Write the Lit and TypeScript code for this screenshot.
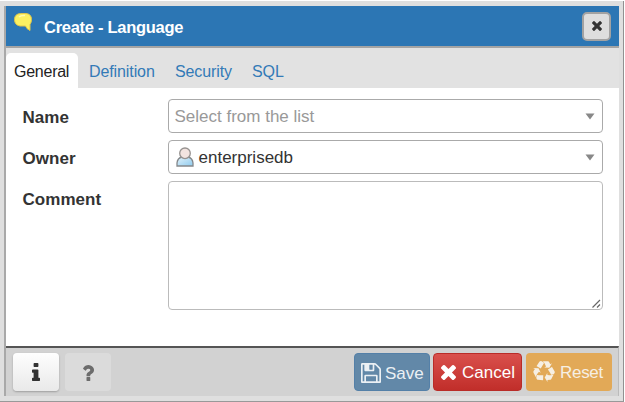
import { LitElement, html, css, svg } from "lit";
import { customElement } from "lit/decorators.js";

const TIMES = "M1490 1322q0 40-28 68l-136 136q-28 28-68 28t-68-28l-294-294-294 294q-28 28-68 28t-68-28l-136-136q-28-28-28-68t28-68l294-294-294-294q-28-28-28-68t28-68l136-136q28-28 68-28t68 28l294 294 294-294q28-28 68-28t68 28l136 136q28 28 28 68t-28 68l-294 294 294 294q28 28 28 68z";
const INFO = "M1216 1344v128q0 26-19 45t-45 19h-512q-26 0-45-19t-19-45v-128q0-26 19-45t45-19h64v-384h-64q-26 0-45-19t-19-45v-128q0-26 19-45t45-19h384q26 0 45 19t19 45v576h64q26 0 45 19t19 45zm-128-1152v192q0 26-19 45t-45 19h-256q-26 0-45-19t-19-45v-192q0-26 19-45t45-19h256q26 0 45 19t19 45z";
const QUESTION = "M1088 1256v240q0 16-12 28t-28 12h-240q-16 0-28-12t-12-28v-240q0-16 12-28t28-12h240q16 0 28 12t12 28zm316-600q0 54-15.500 101t-35 76.500-55 59.500-57.500 43.500-61 35.500q-41 23-68.500 65t-27.500 67q0 17-12 32.500t-28 15.500h-240q-15 0-25.500-18.500t-10.500-37.500v-45q0-83 65-156.500t143-108.500q59-27 84-56t25-76q0-42-46.500-74t-107.500-32q-65 0-108 29-35 25-107 115-13 16-31 16-12 0-25-8l-164-125q-13-10-15.500-25t5.500-28q160-266 464-266 80 0 161 31t146 83 106 127.500 41 158.500z";
const FLOPPY = "M512 1536h768v-384h-768v384zm896 0h128v-896q0-14-10-38.500t-20-34.500l-281-281q-10-10-34-20t-39-10v416q0 40-28 68t-68 28h-576q-40 0-68-28t-28-68v-416h-128v1280h128v-416q0-40 28-68t68-28h832q40 0 68 28t28 68v416zm-384-928v-320q0-13-9.500-22.500t-22.500-9.500h-192q-13 0-22.500 9.500t-9.500 22.500v320q0 13 9.500 22.500t22.500 9.500h192q13 0 22.500-9.500t9.500-22.500zm640 32v928q0 40-28 68t-68 28h-1344q-40 0-68-28t-28-68v-1344q0-40 28-68t68-28h928q40 0 88 20t76 48l280 280q28 28 48 76t20 88z";
const RECYCLE = "M836 1169l-15 368-2 22-420-29q-36-3-67-31.500t-47-65.500q-11-27-14.500-55t4-65 12-55 21.500-64 19-53q78 12 509 28zm-387-586l180 379-147-92q-63 72-111.500 144.500t-72.500 125-39.500 94.500-18.500 63l-4 21-190-357q-17-26-18-56t6-47l8-18q35-63 114-188l-140-86zm1231 517l-188 359q-12 29-36.500 46.500t-43.500 20.500l-18 4q-71 7-219 12l8 164-230-367 211-362 7 173q170 16 283 5t170-33zm-785-924q-47 63-265 435l-317-187-19-12 225-356q20-31 60-45t80-10q24 2 48.500 12t42 21 41.500 33 36 34.500 36 39.500 32 35zm655 307l212 363q18 37 12.500 76t-27.500 74q-13 20-33 37t-38 28-48.500 22-47 16-51.500 14-46 12q-34-72-265-436l313-195zm-143-226l142-83-220 373-419-20 151-86q-34-89-75-166t-75.500-123.500-64.500-80-47-46.500l-17-13 405 1q31-3 58 10.500t39 28.500l11 15q39 61 112 190z";

const icon = (d: string, viewBox: string, width: number, height: number) => html`
  <svg class="icon" width=${width} height=${height} viewBox=${viewBox} preserveAspectRatio="none">
    ${svg`<path d=${d} fill="currentColor"></path>`}
  </svg>`;

@customElement("app-root")
export class AppRoot extends LitElement {
  static styles = css`
    :host {
      display: block;
      width: 625px;
      height: 402px;
      overflow: hidden;
      background: #fff;
      font-family: "Liberation Sans", Arial, sans-serif;
      font-size: 17px;
      color: #333;
    }
    * { box-sizing: border-box; }
    .icon { display: block; flex: none; }
    .frame {
      width: 624px;
      height: 401px;
      padding: 5px 4px 4px 4px;
      margin-top: 1px;
      background: #dfdfdf;
      border-right: 1px solid #919191;
      border-bottom: 1px solid #999;
    }
    .dialog {
      height: 390px;
      display: flex;
      flex-direction: column;
      border-left: 2px solid #a9a9a9;
      background: #fff;
    }
    .header {
      height: 42px;
      flex: none;
      display: flex;
      align-items: flex-start;
      background: #2c76b4;
      border-bottom: 2px solid #a4a4a4;
    }
    .bubble { display: block; margin: 6px 0 0 7px; flex: none; }
    .title {
      flex: 1;
      margin-left: 11px;
      line-height: 43px;
      color: #fff;
      font-weight: bold;
      font-size: 16.5px;
      letter-spacing: -0.28px;
      white-space: nowrap;
    }
    .close {
      width: 29px;
      height: 29px;
      margin: 6px 8px 0 0;
      display: flex;
      align-items: center;
      justify-content: center;
      padding: 0 0 2px 1px;
      border: 2px solid #a2a2a2;
      border-radius: 5px;
      background: #dedede;
      color: #333;
    }
    .tabs {
      height: 40px;
      flex: none;
      display: flex;
      padding-top: 5px;
      background: #e2e2e2;
      color: #337ab7;
      line-height: 38px;
      font-size: 16px;
      letter-spacing: -0.1px;
      white-space: nowrap;
    }
    .tab { padding-left: 8px; }
    .active {
      width: 72px;
      background: #fff;
      color: #222;
      border-radius: 5px 5px 0 0;
      letter-spacing: -0.25px;
    }
    .t2 { width: 86px; padding-left: 11px; }
    .t3 { width: 80px; padding-left: 11px; }
    .body {
      height: 258px;
      flex: none;
      padding: 11px 16px 0 16px;
      display: grid;
      grid-template-columns: 146px 435px;
      grid-template-rows: 34px 34px 129px;
      row-gap: 7px;
    }
    .label { font-weight: bold; line-height: 37px; letter-spacing: 0.05px; padding-left: 0.5px; }
    .select {
      display: flex;
      align-items: center;
      border: 1px solid #aaa;
      border-radius: 4px;
      padding: 0 7px 0 5.5px;
      white-space: nowrap;
    }
    .value { flex: 1; padding-top: 2px; }
    .placeholder { color: #999; }
    .user { display: block; flex: none; margin: 0 4.5px 0 1.5px; }
    .area {
      border: 1px solid #bbb;
      border-radius: 4px;
      display: flex;
      align-items: flex-end;
      justify-content: flex-end;
      padding: 1px;
    }
    .footer {
      height: 50px;
      flex: none;
      display: flex;
      align-items: flex-start;
      padding: 5px 7px 0 7px;
      border-top: 2px solid #555;
      border-right: 1px solid #bbb;
      background: #d2d2d2;
    }
    .btn {
      height: 38px;
      display: flex;
      align-items: center;
      border-radius: 4px;
      color: #fff;
      white-space: nowrap;
    }
    .btn span { padding-top: 2px; }
    .square { width: 46px; justify-content: center; }
    .info {
      background: linear-gradient(#fefefe, #e9e9e9);
      color: #333;
      box-shadow: 0 1px 2px rgba(0, 0, 0, 0.25);
    }
    .help { margin-left: 6px; background: #dbdbdb; color: #6c6c6c; padding-top: 1px; }
    .spacer { flex: 1; }
    .save { width: 76px; padding: 1px 0 0 6px; gap: 4px; background: #6288a8; color: #ebf0f4; border: 1px solid #5480a8; }
    .cancel { width: 89px; margin-left: 3px; padding-left: 7px; gap: 6px; background: linear-gradient(#d9504c, #c12e2a); border: 1px solid #b92c28; }
    .reset { width: 86px; margin-left: 4px; padding-left: 7px; gap: 5px; background: #e2a957; color: #f6efe3; letter-spacing: -0.3px; }
    .save, .cancel, .reset { position: relative; left: 1px; }
  `;

  render() {
    const arrow = html`<svg class="icon" width="10" height="7" viewBox="0 0 10 7"><path d="M0.500 0.500H9.500L5 6.500Z" fill="#888"></path></svg>`;
    return html`
      <div class="frame">
        <div class="dialog">
          <div class="header">
            <svg class="bubble" width="20" height="20" viewBox="0 0 20 20">
              <path d="M7.500 1.500H13Q18.500 2 18.500 7.500Q18.500 10.500 17 12.500V18.500Q13.500 17 12.500 14H7Q1.500 13 1.500 7.500Q1.500 2 7.500 1.500Z" fill="#fbf162" stroke="#dfc64a"></path>
              <path d="M6 5Q8 3 12 3.500" fill="none" stroke="#fffbb0" stroke-width="1.500"></path>
            </svg>
            <div class="title">Create - Language</div>
            <div class="close">${icon(TIMES, "302 366 1188 1188", 10, 10)}</div>
          </div>
          <div class="tabs">
            <div class="tab active">General</div>
            <div class="tab t2">Definition</div>
            <div class="tab t3">Security</div>
            <div class="tab">SQL</div>
          </div>
          <div class="body">
            <div class="label">Name</div>
            <div class="select"><span class="value placeholder">Select from the list</span>${arrow}</div>
            <div class="label">Owner</div>
            <div class="select">
              <svg class="user" width="18" height="20" viewBox="0 0 18 20">
                <defs>
                  <linearGradient id="shirt" x1="0" y1="0" x2="1" y2="1">
                    <stop offset="0" stop-color="#e3f2fa"></stop>
                    <stop offset="1" stop-color="#8fcbee"></stop>
                  </linearGradient>
                </defs>
                <path d="M1 19V16Q1.500 11 6 10H12Q16.500 11 17 16V19Z" fill="url(#shirt)" stroke="#85888b" stroke-width="1.300"></path>
                <circle cx="9" cy="6.300" r="5.300" fill="#f3e4e0" stroke="#969290" stroke-width="1.300"></circle>
              </svg>
              <span class="value">enterprisedb</span>${arrow}
            </div>
            <div class="label">Comment</div>
            <div class="area">
              <svg class="icon" width="9" height="9" viewBox="0 0 9 9"><path d="M0.500 8.500L8 1M5 8.500L8 5.500" stroke="#666" stroke-width="1.200"></path></svg>
            </div>
          </div>
          <div class="footer">
            <div class="btn square info">${icon(INFO, "576 128 640 1408", 8, 18)}</div>
            <div class="btn square help">${icon(QUESTION, "386 256 1018 1280", 12, 16)}</div>
            <div class="spacer"></div>
            <div class="btn save">${icon(FLOPPY, "128 128 1536 1536", 20, 20)}<span>Save</span></div>
            <div class="btn cancel">${icon(TIMES, "302 366 1188 1188", 15, 15)}<span>Cancel</span></div>
            <div class="btn reset">${icon(RECYCLE, "0 0 1792 1792", 22, 22)}<span>Reset</span></div>
          </div>
        </div>
      </div>`;
  }
}
